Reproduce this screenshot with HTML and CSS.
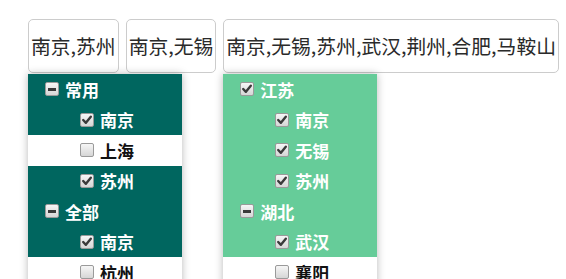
FILE: index.html
```html
<!DOCTYPE html>
<html lang="zh">
<head>
<meta charset="utf-8">
<title>多选下拉</title>
<link rel="stylesheet" href="styles.css">
</head>
<body>
<div class="bar">
  <div class="field">
    <div class="box">南京,苏州</div>
    <div class="dropdown dark">
      <div class="row on"><span class="cb half"></span><span class="lbl">常用</span></div>
      <div class="row on l2"><span class="cb checked"><svg viewBox="0 0 14 14"><path d="M3.2 7 L5.9 9.8 L10.8 3.8" /></svg></span><span class="lbl">南京</span></div>
      <div class="row l2"><span class="cb"></span><span class="lbl">上海</span></div>
      <div class="row on l2"><span class="cb checked"><svg viewBox="0 0 14 14"><path d="M3.2 7 L5.9 9.8 L10.8 3.8" /></svg></span><span class="lbl">苏州</span></div>
      <div class="row on"><span class="cb half"></span><span class="lbl">全部</span></div>
      <div class="row on l2"><span class="cb checked"><svg viewBox="0 0 14 14"><path d="M3.2 7 L5.9 9.8 L10.8 3.8" /></svg></span><span class="lbl">南京</span></div>
      <div class="row l2"><span class="cb"></span><span class="lbl">杭州</span></div>
    </div>
  </div>
  <div class="field">
    <div class="box">南京,无锡</div>
  </div>
  <div class="field">
    <div class="box">南京,无锡,苏州,武汉,荆州,合肥,马鞍山</div>
    <div class="dropdown light">
      <div class="row on"><span class="cb checked"><svg viewBox="0 0 14 14"><path d="M3.2 7 L5.9 9.8 L10.8 3.8" /></svg></span><span class="lbl">江苏</span></div>
      <div class="row on l2"><span class="cb checked"><svg viewBox="0 0 14 14"><path d="M3.2 7 L5.9 9.8 L10.8 3.8" /></svg></span><span class="lbl">南京</span></div>
      <div class="row on l2"><span class="cb checked"><svg viewBox="0 0 14 14"><path d="M3.2 7 L5.9 9.8 L10.8 3.8" /></svg></span><span class="lbl">无锡</span></div>
      <div class="row on l2"><span class="cb checked"><svg viewBox="0 0 14 14"><path d="M3.2 7 L5.9 9.8 L10.8 3.8" /></svg></span><span class="lbl">苏州</span></div>
      <div class="row on"><span class="cb half"></span><span class="lbl">湖北</span></div>
      <div class="row on l2"><span class="cb checked"><svg viewBox="0 0 14 14"><path d="M3.2 7 L5.9 9.8 L10.8 3.8" /></svg></span><span class="lbl">武汉</span></div>
      <div class="row l2"><span class="cb"></span><span class="lbl">襄阳</span></div>
    </div>
  </div>
</div>
</body>
</html>
```
FILE: styles.css
```css
html, body {
  margin: 0;
  padding: 0;
  background: #ffffff;
  overflow: hidden;
  height: 100%;
}
body {
  font-family: "Noto Sans CJK SC", "Noto Sans", sans-serif;
}
.bar {
  display: flex;
  align-items: flex-start;
  gap: 7px;
  padding: 19px 0 0 28px;
}
.field {
  position: relative;
}
.box {
  box-sizing: border-box;
  height: 54px;
  padding: 0 2px;
  border: 1px solid #cccccc;
  border-radius: 5px;
  background: #ffffff;
  color: #2a2a2a;
  font-size: 19.8px;
  line-height: 52px;
  white-space: nowrap;
}
.dropdown {
  position: absolute;
  top: 55px;
  left: 0;
  width: 154px;
  background: #ffffff;
  box-shadow: 0 0 8px rgba(0, 0, 0, 0.28);
  z-index: 2;
}
.row {
  box-sizing: border-box;
  height: 30.5px;
  display: flex;
  align-items: center;
  padding-left: 17px;
  font-size: 17px;
  font-weight: bold;
  color: #111111;
}
.row.l2 {
  padding-left: 52px;
}
.dark .row.on {
  background: #00665f;
  color: #ffffff;
}
.light .row.on {
  background: #66cc99;
  color: #ffffff;
}
.lbl {
  margin-left: 6px;
  line-height: 1;
}
.cb {
  box-sizing: border-box;
  position: relative;
  width: 14px;
  height: 14px;
  flex: none;
  border: 1px solid #9a9a9a;
  border-radius: 2px;
  background: linear-gradient(#f6f6f6, #d6d6d6);
}
.cb svg {
  position: absolute;
  left: -1px;
  top: -1px;
  width: 14px;
  height: 14px;
}
.cb svg path {
  fill: none;
  stroke: #3a3a3a;
  stroke-width: 2.4;
  stroke-linecap: round;
  stroke-linejoin: round;
}
.cb.half::after {
  content: "";
  position: absolute;
  left: 2px;
  top: 4.5px;
  width: 8px;
  height: 3px;
  background: #3a3a3a;
}
```
